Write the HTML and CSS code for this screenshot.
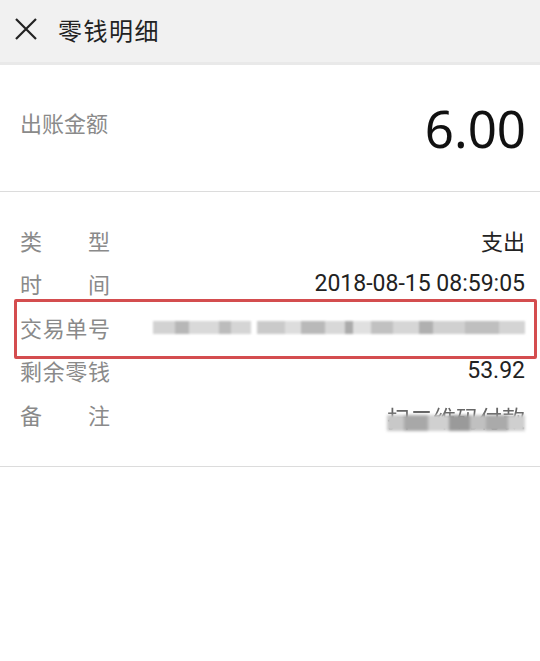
FILE: index.html
```html
<!DOCTYPE html>
<html lang="zh-CN">
<head>
<meta charset="utf-8">
<title>零钱明细</title>
<link rel="stylesheet" href="styles.css">
</head>
<body>
<header class="topbar">
  <svg class="close" width="24" height="24" viewBox="0 0 24 24"><path d="M2 2 L22 22 M22 2 L2 22" stroke="#222" stroke-width="2.2" fill="none"/></svg>
  <h1 class="title">零钱明细</h1>
</header>
<section class="amount">
  <span class="amount-label">出账金额</span>
  <span class="amount-value">6.00</span>
</section>
<section class="details">
  <div class="row"><span class="label">类型</span><span class="value">支出</span></div>
  <div class="row"><span class="label">时间</span><span class="value num">2018-08-15 08:59:05</span></div>
  <div class="row row-marked"><span class="label">交易单号</span>
    <span class="blurred">
      <i class="b1"></i><i class="b2"></i><i class="b3"></i><i class="b4"></i><i class="b5"></i><i class="b6"></i><i class="b7"></i><i class="b8"></i><i class="b9"></i><i class="b10"></i><i class="b11"></i><i class="b12"></i><i class="b13"></i><i class="b14"></i><i class="b15"></i><i class="b16"></i><i class="b17"></i><i class="b18"></i>
    </span>
  </div>
  <div class="row"><span class="label">剩余零钱</span><span class="value num">53.92</span></div>
  <div class="row"><span class="label">备注</span><span class="value note">扫二维码付款<span class="note-blur"></span></span></div>
</section>
</body>
</html>
```
FILE: styles.css
```css
html, body {
  margin: 0;
  padding: 0;
  background: #fff;
}
body {
  width: 540px;
  height: 661px;
  font-family: "Noto Sans CJK SC", "Noto Sans", sans-serif;
  color: #222;
}
.topbar {
  height: 62px;
  background: #f1f1f1;
  border-bottom: 3px solid #e9e9e9;
  display: flex;
  align-items: center;
  padding-left: 14px;
}
.close {
  display: block;
  margin-top: -4px;
}
.title {
  margin: -4px 0 0 20px;
  font-size: 24px;
  font-weight: 400;
  color: #222;
  letter-spacing: 1.5px;
}
.amount {
  height: 126px;
  border-bottom: 1px solid #dcdcdc;
  display: flex;
  align-items: center;
  justify-content: space-between;
  padding: 0 14px 0 20px;
}
.amount-label {
  font-size: 22px;
  color: #8a8a8a;
  margin-top: -12px;
}
.amount-value {
  font-family: "Noto Sans", "Open Sans", sans-serif;
  font-size: 51px;
  color: #111;
  line-height: 1;
}
.details {
  padding: 26px 0 30px;
  border-bottom: 1px solid #dcdcdc;
}
.row {
  height: 43.5px;
  display: flex;
  align-items: center;
  justify-content: space-between;
  padding: 0 15px 0 20px;
  position: relative;
}
.label {
  width: 90px;
  font-size: 22px;
  color: #8a8a8a;
  text-align: justify;
  text-align-last: justify;
  white-space: nowrap;
}
.value {
  font-size: 22px;
  color: #222;
}
.num {
  font-family: Roboto, "Noto Sans", sans-serif;
  font-size: 23px;
}
.row-marked::after {
  content: "";
  position: absolute;
  left: 14px;
  right: 3px;
  top: -6px;
  bottom: -10px;
  border: 3px solid #d44d4f;
  border-radius: 2px;
}
.blurred {
  display: flex;
  height: 13px;
  width: 372px;
  margin-top: 2px;
  filter: blur(1px);
  opacity: 0.7;
}
.blurred i {
  display: block;
  height: 100%;
}
.b1 { width: 22px; background: #c0c0c0; }
.b2 { width: 14px; background: #9a9a9a; }
.b3 { width: 30px; background: #cacaca; }
.b4 { width: 12px; background: #a0a0a0; }
.b5 { width: 20px; background: #c4c4c4; }
.b6 { width: 6px; background: #fff; }
.b7 { width: 28px; background: #b5b5b5; }
.b8 { width: 16px; background: #d0d0d0; }
.b9 { width: 24px; background: #9c9c9c; }
.b10 { width: 20px; background: #c8c8c8; }
.b11 { width: 8px; background: #888; }
.b12 { width: 18px; background: #d4d4d4; }
.b13 { width: 22px; background: #a8a8a8; }
.b14 { width: 26px; background: #c6c6c6; }
.b15 { width: 14px; background: #8f8f8f; }
.b16 { width: 32px; background: #bdbdbd; }
.b17 { width: 34px; background: #a4a4a4; }
.b18 { width: 26px; background: #c2c2c2; }
.note {
  position: relative;
  color: #666;
  font-size: 23px;
  margin-top: 6px;
  filter: blur(0.5px);
}
.note-blur {
  position: absolute;
  left: 0;
  right: 0;
  top: 45%;
  height: 16px;
  background: linear-gradient(90deg, #c8c8c8 0 12%, #a8a8a8 12% 30%, #d0d0d0 30% 45%, #9a9a9a 45% 60%, #c0c0c0 60% 72%, #aaa 72% 88%, #cfcfcf 88% 100%);
  filter: blur(1.5px);
}
```
